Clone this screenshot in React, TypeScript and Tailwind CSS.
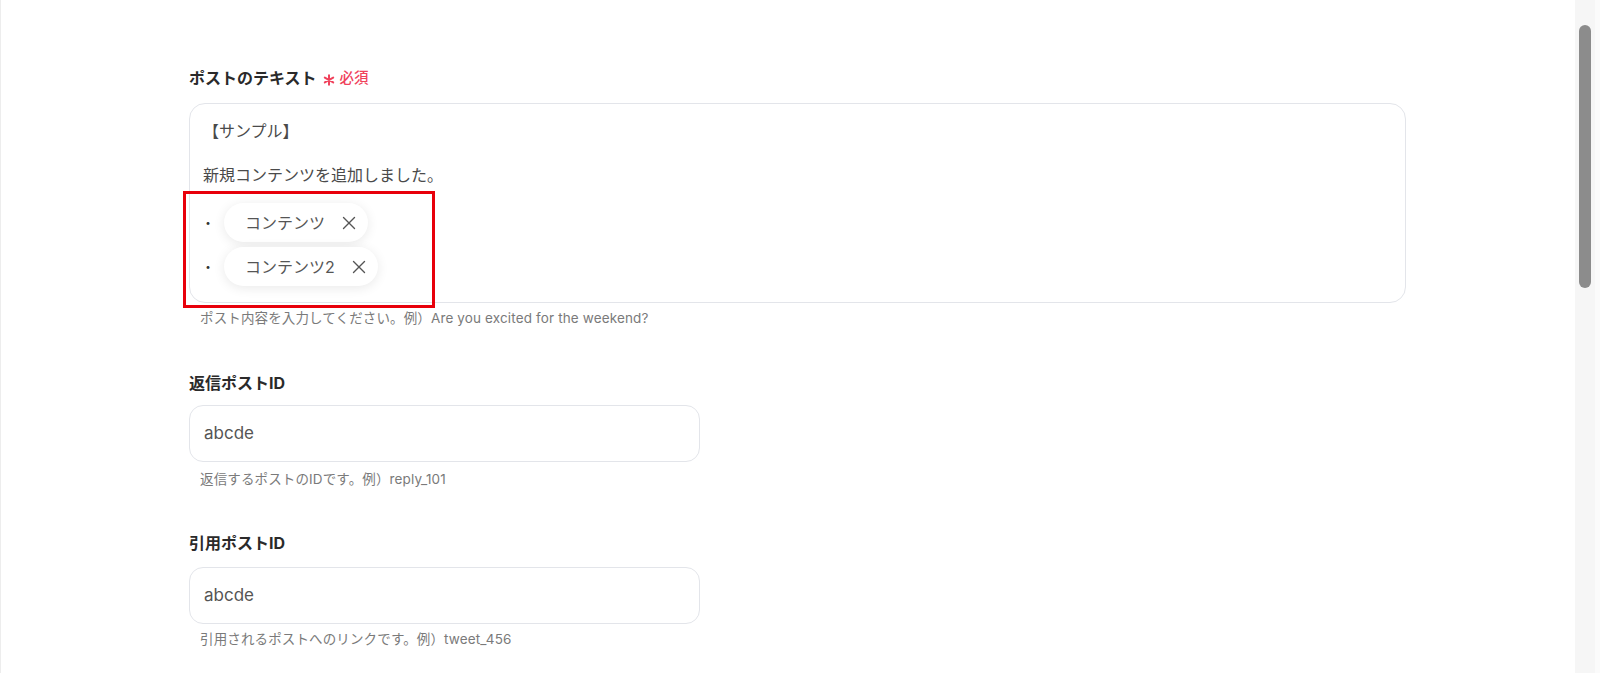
import { X } from 'lucide-react';

const font = { fontFamily: '"Inter", "Noto Sans CJK JP", sans-serif' };

function RequiredMark() {
  return (
    <svg viewBox="0 0 12 12" className="h-[12px] w-[12px]" fill="none" stroke="currentColor" strokeWidth={2} strokeLinecap="round">
      <path d="M6 1.2v9.6M1.8 3.6l8.4 4.8M1.8 8.4l8.4-4.8" />
    </svg>
  );
}

function FieldLabel({ text, required }: { text: string; required?: boolean }) {
  return (
    <div className="flex h-[22px] items-center text-[16px] font-bold leading-[22px] text-[#2a2a2a]">
      <span>{text}</span>
      {required ? (
        <span className="ml-[6px] flex items-center text-[#f0425c]">
          <span className="mt-[3px]">
            <RequiredMark />
          </span>
          <span className="ml-[5px] text-[14.5px] font-medium">必須</span>
        </span>
      ) : null}
    </div>
  );
}

function Hint({ children }: { children: string }) {
  return <p className="pl-[11px] text-[13.5px] leading-[20px] tracking-[0.01em] text-[#7a7a7a]">{children}</p>;
}

function Chip({ label }: { label: string }) {
  return (
    <div className="flex h-[39px] items-center rounded-full bg-white pl-[21px] pr-[8px] text-[16px] text-[#555] shadow-[0_2px_12px_rgba(0,0,0,0.09)]">
      <span>{label}</span>
      <X className="ml-[13px] h-[22px] w-[22px] text-[#555]" strokeWidth={1.5} />
    </div>
  );
}

function BulletRow({ label, className }: { label: string; className?: string }) {
  return (
    <div className={`flex items-center ${className ?? ''}`}>
      <span className="-ml-[3px] w-[16px] text-center text-[14px] text-[#333]">・</span>
      <div className="ml-[8px]">
        <Chip label={label} />
      </div>
    </div>
  );
}

function TextInput({ value }: { value: string }) {
  return (
    <div className="flex h-[57px] w-[511px] items-center rounded-[14px] border border-[#e3e5ea] pl-[14px] text-[17px] text-[#555]">
      {value}
    </div>
  );
}

export default function App() {
  return (
    <div className="flex h-[673px] w-[1600px] overflow-hidden bg-white" style={font}>
      <main className="flex-1 border-l border-[#ededed] pl-[188px] pt-[67px]">
        <FieldLabel text="ポストのテキスト" required />

        <div className="relative mt-[14px] h-[200px] w-[1217px] rounded-[16px] border border-[#e3e5ea] pl-[13px] pt-[5px] text-[16px] text-[#4a4a4a]">
          <p className="leading-[44px]">【サンプル】</p>
          <p className="leading-[44px]">新規コンテンツを追加しました。</p>
          <BulletRow label="コンテンツ" className="mt-[6px]" />
          <BulletRow label="コンテンツ2" className="mt-[5px]" />

          {/* highlight frame drawn over the inserted chips */}
          <div className="pointer-events-none absolute left-[-7px] top-[87px] h-[117px] w-[252px] border-[3px] border-[#e8000b]" />
        </div>

        <div className="mt-[5px]">
          <Hint>ポスト内容を入力してください。例）Are you excited for the weekend?</Hint>
        </div>

        <div className="mt-[44px]">
          <FieldLabel text="返信ポストID" />
        </div>
        <div className="mt-[11px]">
          <TextInput value="abcde" />
        </div>
        <div className="mt-[7px]">
          <Hint>返信するポストのIDです。例）reply_101</Hint>
        </div>

        <div className="mt-[43px]">
          <FieldLabel text="引用ポストID" />
        </div>
        <div className="mt-[13px]">
          <TextInput value="abcde" />
        </div>
        <div className="mt-[5px]">
          <Hint>引用されるポストへのリンクです。例）tweet_456</Hint>
        </div>
      </main>

      {/* scrollbar */}
      <div className="flex w-[20px] justify-center bg-[#f6f6f6] pt-[25px]">
        <div className="h-[263px] w-[12px] rounded-full bg-[#8c8c8c]" />
      </div>
      <div className="w-[5px] bg-[#fbfbfb]" />
    </div>
  );
}
